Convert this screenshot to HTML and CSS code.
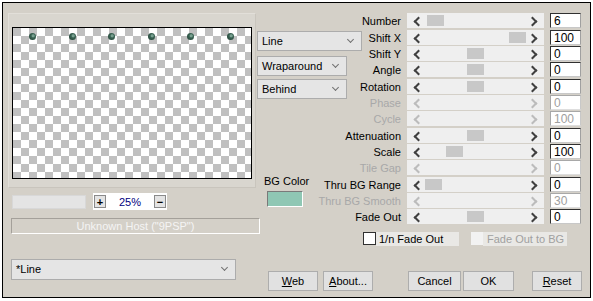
FILE: index.html
```html
<!DOCTYPE html>
<html lang="en">
<head>
  <meta charset="UTF-8">
  <title>Tile Filter</title>
  <link rel="stylesheet" href="styles.css">
</head>
<body>
  <div class="dialog">
    <div class="left">
      <div class="preview">
        <div class="canvas">
          <span class="dot" style="left: 16px"></span>
          <span class="dot" style="left: 56px"></span>
          <span class="dot" style="left: 95px"></span>
          <span class="dot" style="left: 135px"></span>
          <span class="dot" style="left: 174px"></span>
          <span class="dot" style="left: 214px"></span>
        </div>
      </div>
      <div class="zoom-row">
        <div class="blank"></div>
        <div class="zoom">
          <button class="zbtn">+</button>
          <span class="zval">25%</span>
          <button class="zbtn">&minus;</button>
        </div>
      </div>
      <div class="host">Unknown Host ("9PSP")</div>
      <div class="select preset">*Line</div>
    </div>

    <div class="right">
      <div class="upper">
        <div class="opts">
          <div class="select sel-line">Line</div>
          <div class="select sel-wrap">Wraparound</div>
          <div class="select sel-behind">Behind</div>
          <div class="bg-block">
            <div class="bg-label">BG Color</div>
            <div class="swatch"></div>
          </div>
        </div>

        <div class="params">
          <div class="label">Number</div>
          <div class="track"><span class="thumb" style="left: 20px"></span></div>
          <div class="value">6</div>

          <div class="label">Shift X</div>
          <div class="track"><span class="thumb" style="left: 102px"></span></div>
          <div class="value">100</div>

          <div class="label">Shift Y</div>
          <div class="track"><span class="thumb" style="left: 60px"></span></div>
          <div class="value">0</div>

          <div class="label">Angle</div>
          <div class="track"><span class="thumb" style="left: 60px"></span></div>
          <div class="value">0</div>

          <div class="label">Rotation</div>
          <div class="track"><span class="thumb" style="left: 60px"></span></div>
          <div class="value">0</div>

          <div class="label off">Phase</div>
          <div class="track off"></div>
          <div class="value off">0</div>

          <div class="label off">Cycle</div>
          <div class="track off"></div>
          <div class="value off">100</div>

          <div class="label">Attenuation</div>
          <div class="track"><span class="thumb" style="left: 60px"></span></div>
          <div class="value">0</div>

          <div class="label">Scale</div>
          <div class="track"><span class="thumb" style="left: 39px"></span></div>
          <div class="value">100</div>

          <div class="label off">Tile Gap</div>
          <div class="track off"></div>
          <div class="value off">0</div>

          <div class="label">Thru BG Range</div>
          <div class="track"><span class="thumb" style="left: 18px"></span></div>
          <div class="value">0</div>

          <div class="label off">Thru BG Smooth</div>
          <div class="track off"></div>
          <div class="value off">30</div>

          <div class="label">Fade Out</div>
          <div class="track"><span class="thumb" style="left: 60px"></span></div>
          <div class="value">0</div>
        </div>
      </div>

      <div class="checks">
        <span class="box"></span>
        <span class="check-label">1/n Fade Out</span>
        <span class="box off"></span>
        <span class="check-label off">Fade Out to BG</span>
      </div>

      <div class="buttons">
        <button class="btn btn-web"><u>W</u>eb</button>
        <button class="btn btn-about"><u>A</u>bout...</button>
        <button class="btn btn-cancel">Cancel</button>
        <button class="btn btn-ok">OK</button>
        <button class="btn btn-reset"><u>R</u>eset</button>
      </div>
    </div>
  </div>
</body>
</html>
```

FILE: styles.css
```css
* {
  box-sizing: border-box;
}

body {
  margin: 0;
  background: #fff;
  font-family: "Liberation Sans", Arial, sans-serif;
  font-size: 11px;
  color: #000;
}

.dialog {
  margin: 2px;
  width: 589px;
  height: 296px;
  border: 1px solid #000;
  background: #d4d0c8;
  display: flex;
}

/* left side: preview and preset */
.left {
  margin-left: 5px;
  width: 249px;
  padding-top: 10px;
}

.preview {
  width: 248px;
  height: 175px;
  padding: 13px 0 0 3px;
  background: #d9d6cf;
  border: 1px solid #e2dfd9;
  border-right-color: #c9c5bd;
  border-bottom-color: #c9c5bd;
}

.canvas {
  position: relative;
  width: 240px;
  height: 152px;
  border: 1px solid #000;
  background: repeating-conic-gradient(#fff 0 25%, #c0c0c0 0 50%) 0 0 / 16px 16px;
}

.dot {
  position: absolute;
  top: 5px;
  width: 7px;
  height: 7px;
  border-radius: 50%;
  background: radial-gradient(circle at 60% 40%, #7aa292 0 1px, #3a6454 2px, #1f3a30 100%);
}

.zoom-row {
  display: flex;
  align-items: center;
  margin-top: 5px;
  height: 17px;
}

.blank {
  margin-left: 4px;
  width: 74px;
  height: 14px;
  background: #e4e4e4;
  border: 1px solid #d8d8d8;
}

.zoom {
  margin-left: 7px;
  width: 74px;
  height: 17px;
  background: #fff;
  display: flex;
  align-items: center;
  justify-content: space-between;
  padding: 0 1px;
}

.zbtn {
  width: 12px;
  height: 13px;
  padding: 0;
  border: 1px solid #8a8a8a;
  background: #e4e4e4;
  font-family: inherit;
  font-size: 11px;
  font-weight: bold;
  line-height: 10px;
  color: #000;
}

.zval {
  color: #000080;
}

.host {
  margin-top: 8px;
  margin-left: 3px;
  width: 249px;
  height: 16px;
  line-height: 14px;
  text-align: center;
  color: #f4f4f4;
  border: 1px solid;
  border-color: #a4a09a #fff #fff #a4a09a;
}

.select {
  position: relative;
  height: 20px;
  line-height: 18px;
  padding-left: 4px;
  background: #e5e5e5;
  border: 1px solid #acacac;
}

.select::after {
  content: "";
  position: absolute;
  right: 8px;
  top: 5px;
  width: 4px;
  height: 4px;
  border-left: 1px solid #707070;
  border-bottom: 1px solid #707070;
  transform: rotate(-45deg);
}

.preset {
  margin-top: 25px;
  margin-left: 3px;
  width: 225px;
  height: 21px;
}

/* right side */
.right {
  width: 333px;
  padding-top: 10.33px;
}

.upper {
  display: flex;
}

.opts {
  width: 55px;
  display: flex;
  flex-direction: column;
  position: relative;
  z-index: 1;
}

.opts .select {
  flex: none;
}

.sel-line {
  margin-top: 17.67px;
  width: 105px;
}

.sel-wrap {
  margin-top: 5px;
  width: 90px;
}

.sel-behind {
  margin-top: 3.5px;
  width: 90px;
}

.bg-block {
  margin-top: 76px;
  margin-left: 7px;
  width: 42px;
}

.bg-label {
  text-align: center;
  line-height: 13px;
  white-space: nowrap;
}

.swatch {
  margin: 2.5px auto 0;
  width: 36px;
  height: 16px;
  background: #8fc7b4;
  border: 1px solid;
  border-color: #7a7a7a #fff #fff #7a7a7a;
}

.params {
  display: grid;
  grid-template-columns: 89px 137px 31px;
  grid-auto-rows: 16.33px;
  column-gap: 6px;
}

.label {
  height: 15px;
  line-height: 16px;
  text-align: right;
  white-space: nowrap;
}

.label.off {
  color: #a8a8a8;
}

.track {
  position: relative;
  height: 15px;
  background: #efefef;
}

.track::before,
.track::after {
  content: "";
  position: absolute;
  top: 5px;
  width: 5px;
  height: 5px;
  border-left: 2px solid #404040;
  border-bottom: 2px solid #404040;
}

.track::before {
  left: 8px;
  transform: rotate(45deg);
}

.track::after {
  right: 8px;
  transform: rotate(-135deg);
}

.track.off::before,
.track.off::after {
  border-color: #bcbcbc;
}

.thumb {
  position: absolute;
  top: 2px;
  width: 17px;
  height: 11px;
  background: #c8c8c8;
}

.value {
  height: 15px;
  line-height: 14px;
  padding-left: 3px;
  background: #fff;
  border: 1px solid;
  border-color: #303030 #a0a0a0 #c8c8c8 #303030;
  font-size: 12px;
}

.value.off {
  color: #a0a0a0;
  border-color: #a8a8a8 #c8c8c8 #dedede #a8a8a8;
}

.checks {
  display: flex;
  margin-top: 6.4px;
  padding-left: 106px;
  height: 14px;
}

.box {
  width: 13px;
  height: 13px;
  background: #fff;
  border: 1px solid #303030;
}

.box.off {
  margin-left: 12px;
  width: 12px;
  background: #f2f2f2;
  border-color: #f2f2f2;
}

.check-label {
  width: 83px;
  height: 14px;
  line-height: 14px;
  padding-left: 3px;
  background: #e9e8e5;
  white-space: nowrap;
}

.check-label.off {
  width: 84px;
  padding-left: 4px;
  color: #a0a0a0;
}

.buttons {
  display: flex;
  margin-top: 25px;
  padding-left: 11px;
}

.btn {
  height: 20px;
  padding: 0;
  background: #e1e1e1;
  border: 1px solid #adadad;
  font-family: inherit;
  font-size: 11px;
  color: #000;
}

.btn-web {
  width: 50px;
}

.btn-about {
  margin-left: 5px;
  width: 50px;
}

.btn-cancel {
  margin-left: 35px;
  width: 53px;
}

.btn-ok {
  margin-left: 2px;
  width: 51px;
}

.btn-reset {
  margin-left: 18px;
  width: 50px;
}
```
